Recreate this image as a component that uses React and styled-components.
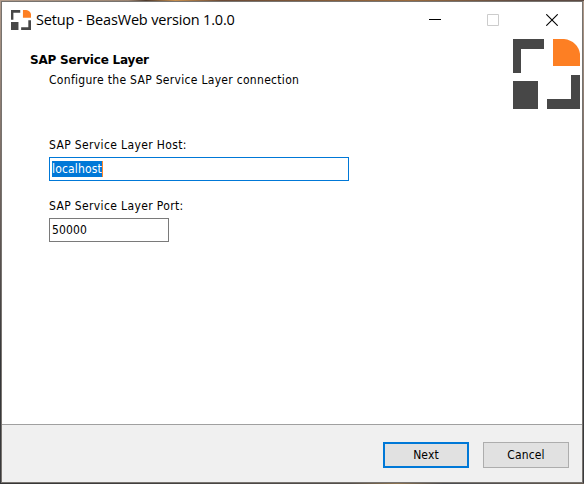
import React from 'react';
import styled, { createGlobalStyle } from 'styled-components';

const GlobalStyle = createGlobalStyle`
  * {
    box-sizing: border-box;
  }

  body {
    margin: 0;
    overflow: hidden;
  }
`;

const Logo = ({ size }) => (
  <LogoSvg $size={size} viewBox="0 0 67 70" preserveAspectRatio="none">
    <path fill="#474747" d="M0 0h31v10H8v24H0z" />
    <path fill="#fd7f23" d="M40 0h11c9 1 15 7 16 15v12H40z" />
    <path fill="#474747" d="M0 42h25v28H0z" />
    <path fill="#474747" d="M58 36h9v34H34V60h24z" />
  </LogoSvg>
);

const App = () => {
  return (
    <Desktop>
      <GlobalStyle />
      <Window>
        <TitleBar>
          <Logo size="small" />
          <Title>Setup - BeasWeb version 1.0.0</Title>
          <CaptionButton aria-label="Minimize">
            <svg width="12" height="12" shapeRendering="crispEdges">
              <path d="M0 5.5h12" stroke="#000" />
            </svg>
          </CaptionButton>
          <CaptionButton aria-label="Maximize" disabled>
            <svg width="12" height="12">
              <path d="M.5.5h11v11H.5z" stroke="#ccc" fill="none" />
            </svg>
          </CaptionButton>
          <CaptionButton aria-label="Close">
            <svg width="12" height="12">
              <path d="M.3.3l11.4 11.4M11.7.3L.3 11.7" stroke="#000" strokeWidth="1.1" />
            </svg>
          </CaptionButton>
        </TitleBar>
        <Header>
          <div>
            <Heading>SAP Service Layer</Heading>
            <Description>Configure the SAP Service Layer connection</Description>
          </div>
          <Logo size="large" />
        </Header>
        <Form>
          <Label>SAP Service Layer Host:</Label>
          <Field $width="300px" $active>
            <Selection>localhost</Selection>
          </Field>
          <Label>SAP Service Layer Port:</Label>
          <Field $width="120px">50000</Field>
        </Form>
        <Footer>
          <Button $primary>Next</Button>
          <Button>Cancel</Button>
        </Footer>
      </Window>
    </Desktop>
  );
};

// Styled Components
const Desktop = styled.div`
  width: 584px;
  height: 484px;
  padding: 1px;
  background:
    linear-gradient(90deg, #b39c8b, #9c8470 22%, #4e3a2c 25%, #c98f4c 30%, #6b4a35 38%, #9a6a3c 70%, #5d4a42 90%) top / 100% 1px no-repeat,
    linear-gradient(90deg, #353535, #55504c 60%, #8d7350 68%, #4b4c50 76%, #655b50) bottom / 100% 1px no-repeat,
    linear-gradient(#b09a8a, #665c58 45%, #353638 75%, #3a3a3c);
  font-family: 'DejaVu Sans Condensed', 'DejaVu Sans', sans-serif;
  font-stretch: condensed;
  font-size: 12px;
  color: #000;
`;

const Window = styled.div`
  display: flex;
  flex-direction: column;
  height: 482px;
  border: 1px solid #77736f;
  background: #fff;
`;

const TitleBar = styled.div`
  display: flex;
  align-items: center;
  height: 35px;
  padding: 0 1px 0 9px;
`;

const LogoSvg = styled.svg`
  flex: none;
  width: ${({ $size }) => ($size === 'large' ? '67px' : '20px')};
  height: ${({ $size }) => ($size === 'large' ? '70px' : '20px')};
`;

const Title = styled.div`
  flex: 1;
  margin-left: 5px;
  font-family: 'Open Sans', sans-serif;
  font-stretch: normal;
  font-size: 14.5px;
  letter-spacing: -0.17px;
  white-space: nowrap;
`;

const CaptionButton = styled.button`
  display: flex;
  align-items: center;
  justify-content: center;
  width: 58.5px;
  height: 35px;
  padding: 0;
  border: 0;
  background: none;
`;

const Header = styled.div`
  display: flex;
  justify-content: space-between;
  height: 100px;
  padding: 2px 2px 0 28px;
`;

const Heading = styled.div`
  margin-top: 13px;
  font-family: 'DejaVu Sans', sans-serif;
  font-stretch: normal;
  font-weight: bold;
  letter-spacing: -0.2px;
  line-height: 16px;
`;

const Description = styled.div`
  margin: 4px 0 0 19px;
  letter-spacing: 0.3px;
  line-height: 16px;
`;

const Form = styled.div`
  flex: 1;
  padding-left: 47px;
`;

const Label = styled.div`
  letter-spacing: 0.36px;
  line-height: 16px;
`;

const Field = styled.div`
  display: flex;
  align-items: center;
  width: ${({ $width }) => $width};
  height: 24px;
  margin: 4px 0 17px;
  padding: 0 2px;
  border: 1px solid ${({ $active }) => ($active ? '#0078d7' : '#7a7a7a')};
  letter-spacing: 0.15px;
`;

const Selection = styled.span`
  height: 16px;
  line-height: 16px;
  border-right: 1px solid #ff8728;
  background: #0078d7;
  color: #fff;
`;

const Footer = styled.div`
  display: flex;
  justify-content: flex-end;
  gap: 14px;
  height: 58px;
  padding: 17px 13px 0 0;
  border-top: 1px solid #a0a0a0;
  background: #f0f0f0;
`;

const Button = styled.button`
  width: 86px;
  height: 26px;
  padding: 0;
  border: ${({ $primary }) => ($primary ? '2px solid #0078d7' : '1px solid #adadad')};
  background: #e1e1e1;
  color: #000;
  font: inherit;
  letter-spacing: 0.15px;
`;

export default App;
